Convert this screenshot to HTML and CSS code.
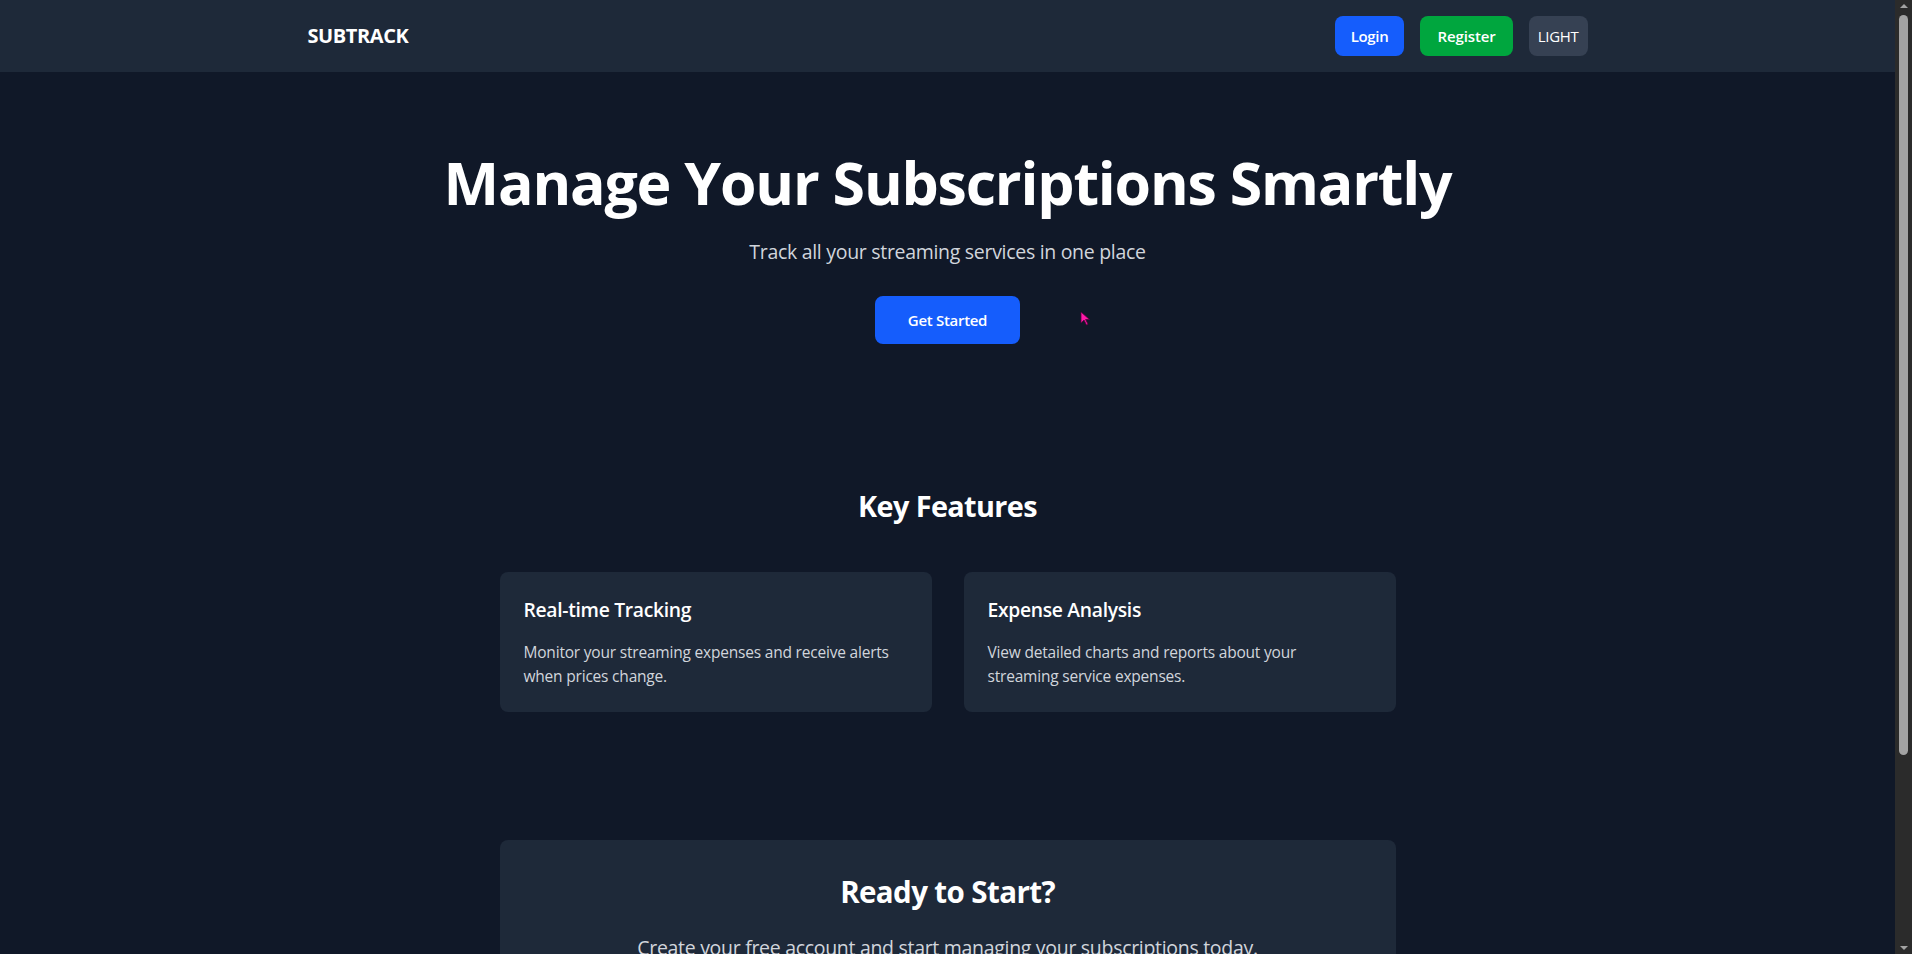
FILE: index.html
```html
<!DOCTYPE html>
<html lang="en">
<head>
<meta charset="utf-8">
<title>SubTrack</title>
<link rel="stylesheet" href="styles.css">
</head>
<body>
<header class="topbar">
  <div class="container topbar-inner">
    <div class="brand">SUBTRACK</div>
    <nav class="actions">
      <a class="btn btn-blue" href="#">Login</a>
      <a class="btn btn-green" href="#">Register</a>
      <button class="btn btn-theme" type="button">LIGHT</button>
    </nav>
  </div>
</header>
<main>
  <section class="hero">
    <h1 class="hero-title">Manage Your Subscriptions Smartly</h1>
    <p class="hero-sub">Track all your streaming services in one place</p>
    <a class="btn btn-blue btn-lg" href="#">Get Started</a>
  </section>
  <section class="features">
    <h2 class="section-title">Key Features</h2>
    <div class="feature-grid">
      <div class="card">
        <h3 class="card-title">Real-time Tracking</h3>
        <p class="card-text">Monitor your streaming expenses and receive alerts when prices change.</p>
      </div>
      <div class="card">
        <h3 class="card-title">Expense Analysis</h3>
        <p class="card-text">View detailed charts and reports about your streaming service expenses.</p>
      </div>
    </div>
  </section>
  <section class="cta-wrap">
    <div class="cta">
      <h2 class="section-title cta-title">Ready to Start?</h2>
      <p class="cta-text">Create your free account and start managing your subscriptions today.</p>
      <a class="btn btn-green btn-lg" href="#">Create Account</a>
    </div>
  </section>
  <footer class="footer">© 2025 SubTrack. All rights reserved.</footer>
</main>
<div class="scrollbar" aria-hidden="true">
  <span class="sb-arrow sb-up"></span>
  <span class="sb-thumb"></span>
  <span class="sb-arrow sb-down"></span>
</div>
<svg class="cursor" width="12" height="16" viewBox="0 0 12 16" aria-hidden="true"><path d="M1 1 L1 12 L4 9 L6.5 14 L8 13.3 L5.6 8.5 L9.5 8.5 Z" fill="#ff1aa8" stroke="#5a0040" stroke-width="0.8"/></svg>
</body>
</html>
```

FILE: styles.css
```css
* { box-sizing: border-box; }
html, body { margin: 0; padding: 0; }
body {
  background: #101828;
  color: #ffffff;
  font-family: "Open Sans", "Noto Sans", "Liberation Sans", sans-serif;
  font-size: 16px;
  line-height: 24px;
  position: relative;
  margin-right: 17px;
}
.container { max-width: 1280px; margin: 0 auto; }
.topbar { background: #1e2939; }
.topbar-inner {
  display: flex;
  align-items: center;
  justify-content: space-between;
  padding: 16px 0;
}
.brand { font-size: 20px; font-weight: 700; line-height: 28px; letter-spacing: -0.4px; }
.actions { display: flex; gap: 16px; }
.btn {
  display: inline-block;
  padding: 8px 16px;
  border: 0;
  border-radius: 8px;
  color: #fff;
  text-decoration: none;
  font-family: inherit;
  font-size: 15px;
  line-height: 24px;
  font-weight: 600;
  letter-spacing: -0.3px;
  cursor: pointer;
}
.actions .btn-green { padding: 8px 17px; letter-spacing: -0.1px; }
.btn-blue { background: #155dfc; }
.btn-green { background: #00a63e; }
.btn-theme { background: #364153; font-weight: 400; padding: 8px 9px; }
.btn-lg { padding: 12px 33px; }
.hero { text-align: center; padding: 80px 16px; }
.hero-title {
  margin: 0 0 26px;
  font-size: 59px;
  line-height: 60px;
  font-weight: 700;
  letter-spacing: -1.2px;
}
.hero-sub {
  margin: 0 0 30px;
  font-size: 19.5px;
  line-height: 28px;
  color: #d1d5dc;
  letter-spacing: -0.3px;
}
.features { padding: 64px 16px; }
.section-title {
  margin: 0 0 48px;
  text-align: center;
  font-size: 28.8px;
  line-height: 36px;
  font-weight: 700;
  letter-spacing: -0.6px;
}
.feature-grid {
  max-width: 896px;
  margin: 0 auto;
  display: grid;
  grid-template-columns: 1fr 1fr;
  gap: 32px;
}
.card { background: #1e2939; border-radius: 8px; padding: 24px; }
.card-title { margin: 0 0 16px; font-size: 19.3px; line-height: 28px; font-weight: 600; letter-spacing: -0.3px; }
.card-text { margin: 0; padding-right: 8px; font-size: 15.5px; line-height: 24px; color: #d1d5dc; letter-spacing: -0.2px; }
.cta-wrap { padding: 64px 16px; }
.cta {
  max-width: 896px;
  margin: 0 auto;
  background: #1e2939;
  border-radius: 8px;
  padding: 34px 40px 48px;
  text-align: center;
}
.cta-title { margin-bottom: 24px; font-size: 29.5px; }
.cta-text { margin: 0 0 32px; font-size: 19.5px; line-height: 28px; color: #d1d5dc; letter-spacing: -0.3px; }
.footer { text-align: center; padding: 32px 16px; color: #99a1af; background: #1e2939; font-size: 14px; }
.cursor { position: absolute; left: 1080px; top: 311px; }
.scrollbar {
  position: fixed;
  top: 0;
  right: 0;
  width: 17px;
  height: 100vh;
  background: #2b2b2b;
  display: flex;
  flex-direction: column;
  align-items: center;
}
.sb-arrow { width: 0; height: 0; border-left: 4px solid transparent; border-right: 4px solid transparent; margin: 4px 0; }
.sb-up { border-bottom: 4px solid #a3a3a3; }
.sb-down { border-top: 4px solid #a3a3a3; margin-top: auto; }
.sb-thumb { width: 9px; height: 740px; margin-top: 3px; background: #a3a3a3; border-radius: 5px; }
```
